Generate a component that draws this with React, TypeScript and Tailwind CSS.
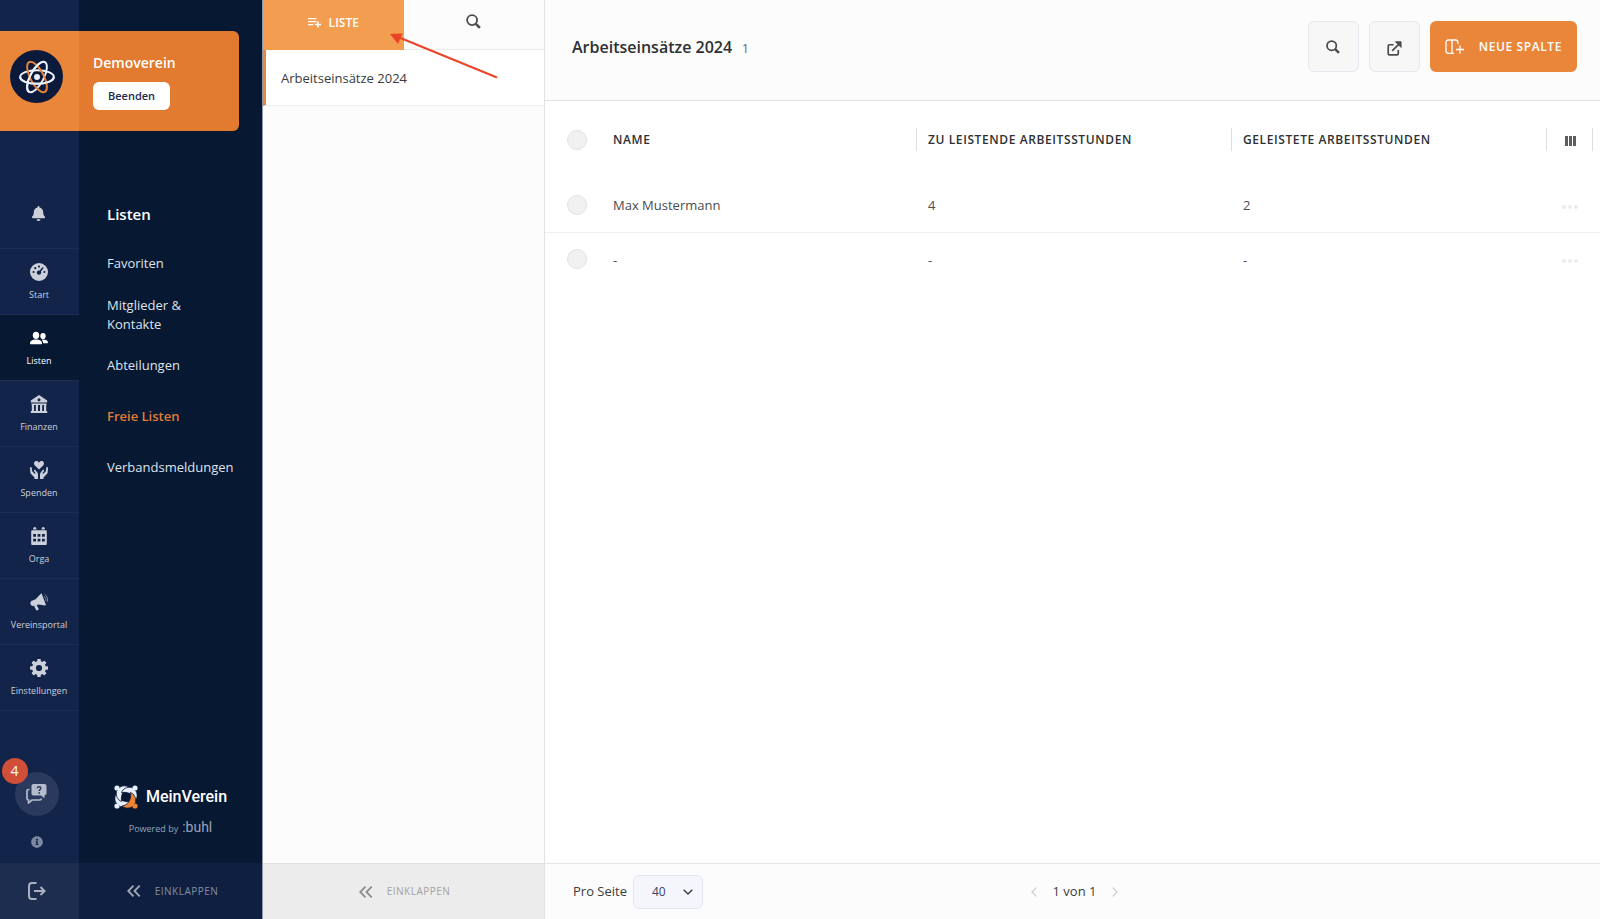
import type { ReactNode } from 'react'
import { clsx } from 'clsx'
import { FaBell, FaInfoCircle } from 'react-icons/fa'

type IconProps = { className?: string }

function GaugeIcon({ className }: IconProps) {
  return (
    <svg viewBox="0 0 18 18" className={className} aria-hidden="true">
      <circle cx="9" cy="9" r="9" fill="currentColor" />
      <g fill="#13244a">
        <circle cx="3.6" cy="9" r="1.1" />
        <circle cx="5.2" cy="5.2" r="1.1" />
        <circle cx="9" cy="3.6" r="1.1" />
        <circle cx="14.4" cy="9" r="1.1" />
        <circle cx="9" cy="9.6" r="2.2" />
      </g>
      <path d="M9 9.6 12.8 5" stroke="#13244a" strokeWidth="1.6" strokeLinecap="round" />
    </svg>
  )
}

function PeopleIcon({ className }: IconProps) {
  return (
    <svg viewBox="0 0 18 18" className={className} fill="currentColor" aria-hidden="true">
      <ellipse cx="6" cy="6.3" rx="3.2" ry="3.6" />
      <path d="M0 14.2c0-2.6 2.600-3.800 6-3.800s6 1.200 6 3.800c0 .7-.4 1-1 1H1c-.6 0-1-.3-1-1z" />
      <ellipse cx="13" cy="7" rx="2.700" ry="3.100" />
      <path d="M11.6 10.800c3.200-.8 6.400.5 6.400 2.600 0 .5-.3.8-.8.8h-4c-.1-1.400-.6-2.500-1.600-3.400z" />
    </svg>
  )
}

function BankIcon({ className }: IconProps) {
  return (
    <svg viewBox="0 0 18 18" className={className} fill="currentColor" aria-hidden="true">
      <path
        fillRule="evenodd"
        d="M9 0 17.200 5.600V7.600H.8V5.600zM9 3.300a1.500 1.500 0 1 0 0 3 1.500 1.500 0 0 0 0-3z"
      />
      <path d="M1.500 8.600h15v1.400h-15zM1.800 9.500h2.200v7H1.800zM5.800 9.500h2.200v7H5.800zM10 9.500h2.200v7H10zM14 9.500h2.200v7H14zM.8 16h16.400v2H.8z" />
    </svg>
  )
}

const HAND_PATH =
  'M0 6.600c0-.8 1.600-.8 1.700 0l.5 3.600 2.200 2.300c.5.500 1.300-.2.900-.8l-1.300-1.700c-.4-.8.6-1.500 1.300-.9l2 2.500c.5.700.7 1.300.7 2V18H4.500v-1.500L.9 12.800c-.4-.5-.6-1-.6-1.500z'

function DonateIcon({ className }: IconProps) {
  return (
    <svg viewBox="0 0 18 18" className={className} fill="currentColor" aria-hidden="true">
      <path d="M9 8.400 4.900 4.500C3.200 2.700 4.200.1 6.300.1 7.500.1 8.500.8 9 1.700 9.500.8 10.500.1 11.700.1c2.100 0 3.100 2.600 1.400 4.400z" />
      <path d={HAND_PATH} />
      <path d={HAND_PATH} transform="matrix(-1 0 0 1 18 0)" />
    </svg>
  )
}

function CalendarIcon({ className }: IconProps) {
  return (
    <svg viewBox="0 0 18 18" className={className} fill="currentColor" aria-hidden="true">
      <path d="M3.200 2.500V1.600a1.600 1.600 0 0 1 3.200 0v.9zM11.600 2.500V1.600a1.600 1.600 0 0 1 3.200 0v.9z" />
      <path
        fillRule="evenodd"
        d="M1.200 4.500c0-.8.500-1.300 1.300-1.300h13c.8 0 1.300.5 1.300 1.300v12.200c0 .8-.5 1.300-1.300 1.300h-13c-.8 0-1.300-.5-1.300-1.300zM3.200 7v2.800H6V7zM7.600 7v2.800h2.800V7zM12 7v2.800h2.800V7zM3.200 11.700v2.800H6v-2.800zM7.600 11.700v2.800h2.800v-2.800zM12 11.700v2.800h2.800v-2.800z"
      />
    </svg>
  )
}

function MegaphoneIcon({ className }: IconProps) {
  return (
    <svg viewBox="0 0 18 18" className={className} fill="currentColor" aria-hidden="true">
      <path d="M10.600 1c.3-.6 1-.6 1.200 0l4 10.500c.2.700-.2 1.100-.9 1l-6.600-1.100-4.500 1.600c-2.900.6-4.500-3.500-2.500-5l4.300-1.700z" />
      <path d="m4 12.800 2.600-1 2 4.300c.3 1-1.900 1.900-2.500.9z" />
      <path
        d="M14 3.400c1.500.6 2.300 3 1.600 4.400M14.800 1.500c2.400 1.300 3.500 5 2.300 7.400"
        fill="none"
        stroke="currentColor"
        strokeWidth=".9"
        strokeOpacity=".6"
      />
    </svg>
  )
}

function GearIcon({ className }: IconProps) {
  return (
    <svg viewBox="0 0 18 18" className={className} fill="currentColor" aria-hidden="true">
      <circle cx="9" cy="9" r="5" fill="none" stroke="currentColor" strokeWidth="3.800" />
      {[0, 45, 90, 135, 180, 225, 270, 315].map((deg) => (
        <rect key={deg} x="7.200" y="0" width="3.600" height="4" rx=".8" transform={`rotate(${deg} 9 9)`} />
      ))}
    </svg>
  )
}

function ChatHelpIcon({ className }: IconProps) {
  return (
    <svg viewBox="0 0 21 20" className={className} aria-hidden="true">
      <path
        d="M3.500 5.500H2.600C1.700 5.500 1 6.200 1 7.100v7.300c0 .9.700 1.600 1.600 1.600v2.800L6 16h7.800c.9 0 1.500-.6 1.500-1.500"
        fill="none"
        stroke="currentColor"
        strokeWidth="1.700"
      />
      <path d="M7.500 0h11c1.200 0 2 .8 2 2v7.200c0 1.200-.8 2-2 2v3L15 11.600H7.500c-1.200 0-2-.8-2-2V2c0-1.200.8-2 2-2z" fill="currentColor" />
      <path d="M11.200 4.300c.1-2 3.700-2 3.700 0 0 1.300-1.800 1.300-1.800 2.600" fill="none" stroke="#2a3a5e" strokeWidth="1.400" />
      <circle cx="13.100" cy="8.900" r=".9" fill="#2a3a5e" />
    </svg>
  )
}

function LogoutIcon({ className }: IconProps) {
  return (
    <svg viewBox="0 0 18 18" className={className} fill="none" stroke="currentColor" strokeWidth="2" aria-hidden="true">
      <path d="M8.500 1H4Q1 1 1 4v10q0 3 3 3h4.500M6 9h10M12.500 5 16.500 9l-4 4" />
    </svg>
  )
}

function DoubleChevronIcon({ className }: IconProps) {
  return (
    <svg viewBox="0 0 14 12" className={className} fill="none" stroke="currentColor" strokeWidth="1.900" aria-hidden="true">
      <path d="M6.500.7 1.300 6l5.200 5.300M12.700.7 7.500 6l5.200 5.300" />
    </svg>
  )
}

function SearchIcon({ className }: IconProps) {
  return (
    <svg viewBox="0 0 16 16" className={className} fill="none" stroke="currentColor" aria-hidden="true">
      <circle cx="6.500" cy="6.500" r="5.300" strokeWidth="2" />
      <path d="m10.500 10.500 4.300 4.300" strokeWidth="2.800" />
    </svg>
  )
}

function ListAddIcon({ className }: IconProps) {
  return (
    <svg viewBox="0 0 13 12" className={className} fill="none" stroke="currentColor" strokeWidth="1.200" aria-hidden="true">
      <path d="M0 1.600h8.500M0 4.600h8.500M0 7.600h5.500" />
      <path d="M10 4.500v6M7 7.500h6" strokeWidth="1.600" />
    </svg>
  )
}

function ExternalIcon({ className }: IconProps) {
  return (
    <svg viewBox="0 0 16 16" className={className} fill="none" stroke="currentColor" strokeWidth="1.800" aria-hidden="true">
      <path d="M7 4H2.500Q1.300 4 1.300 5.200v8.300q0 1.200 1.200 1.200h8.300q1.200 0 1.200-1.200V9.500M5.500 10.500l7-7" />
      <path d="M9 .8h6v6z" fill="currentColor" strokeWidth="1" />
    </svg>
  )
}

function ColumnAddIcon({ className }: IconProps) {
  return (
    <svg viewBox="0 0 20 16" className={className} fill="none" stroke="currentColor" strokeWidth="1.300" aria-hidden="true">
      <path d="M9 14.300H3.500Q1 14.300 1 11.800V3.500Q1 1 3.500 1h7Q13 1 13 3.500V5M7 1v13.300M15 6.500v8M11 10.500h8" />
    </svg>
  )
}

function AtomIcon({ className }: IconProps) {
  return (
    <svg viewBox="0 0 36 36" className={className} fill="none" strokeWidth="2" aria-hidden="true">
      <ellipse cx="18" cy="18" rx="16.800" ry="6.800" stroke="#eaf1fc" />
      <ellipse cx="18" cy="18" rx="6.700" ry="16.800" stroke="#eaf1fc" transform="rotate(28 18 18)" />
      <ellipse cx="18" cy="18" rx="6.700" ry="16.800" stroke="#e98439" transform="rotate(-28 18 18)" />
      <path d="M18 34.800A6.700 16.800 0 0 1 18 1.200" stroke="#eaf1fc" transform="rotate(28 18 18)" />
      <path d="M1.200 18a16.800 6.800 0 0 0 33.600 0" stroke="#eaf1fc" />
      <circle cx="18" cy="18" r="3" fill="#eaf1fc" />
    </svg>
  )
}

function BrandMark({ className }: IconProps) {
  return (
    <svg viewBox="0 0 24 24" className={className} aria-hidden="true">
      {[90, 180, 270, 0].map((deg) => (
        <g key={deg} fill={deg === 0 ? '#ee8432' : '#e6effc'} transform={`rotate(${deg} 12 12)`}>
          <path
            d="M16.300 7.500C20.800 9 22 13 21.600 17.500L18 22C14.500 23.800 11 23.500 8 21 13.500 20.500 18 14.500 16.300 7.500z"
            stroke="#071833"
            strokeWidth=".8"
          />
          <circle cx="21" cy="21" r="2.600" />
        </g>
      ))}
    </svg>
  )
}

const railItems = [
  { label: 'Start', icon: GaugeIcon },
  { label: 'Listen', icon: PeopleIcon, active: true },
  { label: 'Finanzen', icon: BankIcon },
  { label: 'Spenden', icon: DonateIcon },
  { label: 'Orga', icon: CalendarIcon },
  { label: 'Vereinsportal', icon: MegaphoneIcon },
  { label: 'Einstellungen', icon: GearIcon },
]

const listLinks = [
  { label: 'Favoriten' },
  { label: 'Mitglieder & Kontakte' },
  { label: 'Abteilungen' },
  { label: 'Freie Listen', active: true },
  { label: 'Verbandsmeldungen' },
]

const rows = [
  { name: 'Max Mustermann', due: '4', done: '2' },
  { name: '-', due: '-', done: '-' },
]

function Rail() {
  return (
    <aside className="flex w-[79px] shrink-0 flex-col bg-[#13244a] pt-[31px] text-[#cbd0da]">
      <div className="flex h-[100px] justify-center bg-[#ea863a] pt-[19px] pr-[6px]">
        <span className="grid size-[53px] place-items-center rounded-full bg-[#0b1a3a]">
          <AtomIcon className="size-9" />
        </span>
      </div>
      <button
        aria-label="Benachrichtigungen"
        className="mt-[52px] grid h-[66px] place-items-center border-b border-[#1d2e52] pr-[2px] pb-1"
      >
        <FaBell className="size-[15px]" />
      </button>
      <nav>
        {railItems.map((item) => (
          <a
            key={item.label}
            href="#"
            className={clsx(
              'flex h-[66px] flex-col items-center border-b border-[#1d2e52] pt-[14px] pr-px text-[9px] leading-3',
              item.active && 'bg-[#071833] text-white',
            )}
          >
            <item.icon className="mb-2 size-[18px]" />
            {item.label}
          </a>
        ))}
      </nav>
      <div className="mt-auto flex flex-col items-center gap-5 pr-[6px] pb-[15px] text-[#b4bccb]">
        <button
          aria-label="Hilfe-Chat, 4 neue Nachrichten"
          className="relative grid size-11 place-items-center rounded-full bg-[#2a3a5e]"
        >
          <ChatHelpIcon className="h-5 w-[21px]" />
          <span className="absolute -top-[14px] -left-[13px] grid size-[26px] place-items-center rounded-full bg-[#cf4f38] text-sm text-white">
            4
          </span>
        </button>
        <button aria-label="Informationen">
          <FaInfoCircle className="size-3 text-[#7c88a2]" />
        </button>
      </div>
      <button aria-label="Abmelden" className="grid h-14 place-items-center bg-[#1c2d50] pr-[6px] text-[#a9b1c0]">
        <LogoutIcon className="size-[18px]" />
      </button>
    </aside>
  )
}

function SubNav() {
  return (
    <aside className="flex w-[184px] shrink-0 flex-col border-r border-[#8e98aa] bg-[#071833] pt-[31px]">
      <div className="mr-[23px] h-[100px] rounded-r-md bg-[#e27a30] pt-5 pl-[14px] text-white">
        <p className="text-sm leading-6 font-semibold">Demoverein</p>
        <button className="mt-[7px] h-7 rounded-md bg-white px-[15px] pt-px text-[11px] font-semibold text-[#1c2b50]">
          Beenden
        </button>
      </div>
      <nav className="mt-[71px] px-7">
        <h2 className="text-[15px] leading-6 font-semibold text-white">Listen</h2>
        <ul className="mt-3">
          {listLinks.map((link) => (
            <li key={link.label} className="flex h-[51px] items-center">
              <a
                href="#"
                className={clsx(
                  'text-[13px] leading-[19px]',
                  link.active ? 'font-semibold text-[#e07c33]' : 'text-[#dfe3ea]',
                )}
              >
                {link.label}
              </a>
            </li>
          ))}
        </ul>
      </nav>
      <div className="mt-auto mb-6 flex flex-col items-center">
        <div className="flex items-center gap-2">
          <BrandMark className="size-6" />
          <span className="font-[Roboto] text-base leading-6 font-medium text-white">MeinVerein</span>
        </div>
        <p className="mt-2 flex items-baseline gap-1 text-[9px] leading-5 text-[#9aa3b5]">
          Powered by <span className="font-[Roboto] text-sm">:buhl</span>
        </p>
      </div>
      <button className="flex h-14 items-center justify-center gap-[14px] bg-[#0f1f42] pl-1 text-[10px] tracking-wider text-[#868d9a]">
        <DoubleChevronIcon className="h-3 w-[14px] text-[#a0a6b0]" />
        EINKLAPPEN
      </button>
    </aside>
  )
}

function ListPanel() {
  return (
    <section className="flex w-[282px] shrink-0 flex-col border-r border-[#e2e2e2] bg-[#fcfcfc]">
      <div className="flex h-[50px]">
        <button className="flex flex-1 items-center justify-center gap-2 bg-[#f39d50] pb-[5px] text-xs font-semibold text-white">
          <ListAddIcon className="h-3 w-[13px]" />
          LISTE
        </button>
        <button aria-label="Suchen" className="grid flex-1 place-items-center border-b border-[#ececec] pb-[6px] text-[#4b4d50]">
          <SearchIcon className="size-[15px]" />
        </button>
      </div>
      <a
        href="#"
        className="flex h-14 items-center border-b border-l-3 border-b-[#f0f0f0] border-l-[#ea863a] bg-white pt-[2px] pl-[15px] text-[13px] text-[#3a3c40]"
      >
        Arbeitseinsätze 2024
      </a>
      <button className="mt-auto flex h-14 items-center justify-center gap-[14px] border-t border-[#e2e2e2] bg-[#ececec] pl-[2px] text-[10px] tracking-wider text-[#a0a2a5]">
        <DoubleChevronIcon className="h-3 w-[14px] text-[#8c8e92]" />
        EINKLAPPEN
      </button>
    </section>
  )
}

function RoundCheckbox({ label }: { label: string }) {
  return (
    <input
      type="checkbox"
      aria-label={label}
      className="block size-5 appearance-none rounded-full border border-[#e2e2e2] bg-[#f1f1f1] checked:bg-[#ea863a]"
    />
  )
}

function HeadCell({ children, divided }: { children: ReactNode; divided?: boolean }) {
  return (
    <th className="p-0 text-left font-semibold">
      <div className={clsx('flex h-[23px] items-center border-l pl-[11px]', divided ? 'border-[#dedede]' : 'border-transparent')}>
        {children}
      </div>
    </th>
  )
}

function ListTable() {
  return (
    <table className="w-full table-fixed border-collapse text-[13px] text-[#4a4c50]">
      <colgroup>
        <col className="w-14" />
        <col />
        <col />
        <col />
        <col className="w-[54px]" />
      </colgroup>
      <thead>
        <tr className="h-[77px] text-xs tracking-wider text-[#2f3033]">
          <th className="p-0 pl-[22px]">
            <RoundCheckbox label="Alle auswählen" />
          </th>
          <HeadCell>NAME</HeadCell>
          <HeadCell divided>ZU LEISTENDE ARBEITSSTUNDEN</HeadCell>
          <HeadCell divided>GELEISTETE ARBEITSSTUNDEN</HeadCell>
          <th className="p-0 pr-[7px]">
            <button
              aria-label="Spalten verwalten"
              className="flex h-[23px] w-full items-center justify-center gap-px border-x border-[#dedede] pt-[2px] pl-[2px]"
            >
              <span className="h-[10px] w-[3px] bg-[#5b5d60]" />
              <span className="h-[10px] w-[3px] bg-[#5b5d60]" />
              <span className="h-[10px] w-[3px] bg-[#5b5d60]" />
            </button>
          </th>
        </tr>
      </thead>
      <tbody>
        {rows.map((row, i) => (
          <tr key={row.name} className={clsx('h-[54px]', i < rows.length - 1 && 'border-b border-[#f0f0f0]')}>
            <td className="p-0 pl-[22px]">
              <RoundCheckbox label={`${row.name} auswählen`} />
            </td>
            <td className="p-0 pt-[2px] pl-3">{row.name}</td>
            <td className="p-0 pt-[2px] pl-3">{row.due}</td>
            <td className="p-0 pt-[2px] pl-3">{row.done}</td>
            <td className="p-0 pr-[7px]">
              <button aria-label="Aktionen" className="flex w-full justify-center gap-[2px] pt-1">
                <span className="size-1 rounded-full bg-[#ececec]" />
                <span className="size-1 rounded-full bg-[#ececec]" />
                <span className="size-1 rounded-full bg-[#ececec]" />
              </button>
            </td>
          </tr>
        ))}
      </tbody>
    </table>
  )
}

function Pagination() {
  return (
    <footer className="mt-auto grid h-14 grid-cols-[1fr_auto_1fr] items-center border-t border-[#e6e6e6] bg-[#fcfcfc] pr-6 pl-7 text-[13px] text-[#3a3c40]">
      <div className="flex items-center gap-[6px]">
        <label htmlFor="page-size">Pro Seite</label>
        <span className="relative flex items-center">
          <select
            id="page-size"
            defaultValue="40"
            className="h-[34px] w-[70px] appearance-none rounded-md border border-[#e2e4ee] bg-[#f5f6fb] pl-[18px] text-xs text-[#3d4260]"
          >
            <option>20</option>
            <option>40</option>
            <option>80</option>
          </select>
          <svg
            viewBox="0 0 10 6"
            className="pointer-events-none absolute right-[10px] h-[6px] w-[10px]"
            fill="none"
            stroke="#3a3c40"
            strokeWidth="1.400"
            aria-hidden="true"
          >
            <path d="m.7.7 4.300 4.300L9.300.7" />
          </svg>
        </span>
      </div>
      <div className="flex items-center gap-4">
        <button aria-label="Vorherige Seite" className="text-[#cccccc]">
          <svg viewBox="0 0 6 10" className="h-[10px] w-[6px]" fill="none" stroke="currentColor" strokeWidth="1.200" aria-hidden="true">
            <path d="M5.300.7 1 5l4.300 4.300" />
          </svg>
        </button>
        <span>1 von 1</span>
        <button aria-label="Nächste Seite" className="text-[#cccccc]">
          <svg viewBox="0 0 6 10" className="h-[10px] w-[6px]" fill="none" stroke="currentColor" strokeWidth="1.200" aria-hidden="true">
            <path d="M.7.7 5 5 .7 9.300" />
          </svg>
        </button>
      </div>
    </footer>
  )
}

export default function App() {
  return (
    <div className="relative flex min-h-screen bg-white font-['Open_Sans','Noto_Sans',sans-serif]">
      <Rail />
      <SubNav />
      <ListPanel />
      <main className="flex min-w-0 flex-1 flex-col">
        <header className="flex h-[101px] items-center gap-[10px] border-b border-[#e2e2e2] bg-[#fcfcfc] pr-[23px] pb-[7px] pl-[27px]">
          <div className="mr-auto flex items-baseline gap-[10px]">
            <h1 className="text-base font-semibold text-[#2f3033]">Arbeitseinsätze 2024</h1>
            <span className="text-xs text-[#5c5e62]">1</span>
          </div>
          <button
            aria-label="Suchen"
            className="grid size-[51px] place-items-center rounded-md border border-[#e6e7ef] bg-[#f7f7f8] text-[#4b4d50]"
          >
            <SearchIcon className="size-[14px]" />
          </button>
          <button
            aria-label="Extern öffnen"
            className="grid size-[51px] place-items-center rounded-md border border-[#e6e7ef] bg-[#f7f7f8] pt-1 text-[#4b4d50]"
          >
            <ExternalIcon className="size-[15px]" />
          </button>
          <button className="flex h-[51px] items-center gap-[14px] rounded-md bg-[#ea863a] px-[15px] text-xs font-semibold tracking-wider text-white">
            <ColumnAddIcon className="h-4 w-5" />
            NEUE SPALTE
          </button>
        </header>
        <ListTable />
        <Pagination />
      </main>
      {/* Hint arrow pointing at the "Liste" button */}
      <svg
        viewBox="0 0 108 46"
        className="pointer-events-none absolute top-[33px] left-[390px] h-[46px] w-[108px]"
        aria-hidden="true"
      >
        <path d="M8 4 107 44.500" stroke="#ea4427" strokeWidth="2" />
        <path d="M0 1 12.500.5 8 11z" fill="#ea4427" />
      </svg>
    </div>
  )
}
